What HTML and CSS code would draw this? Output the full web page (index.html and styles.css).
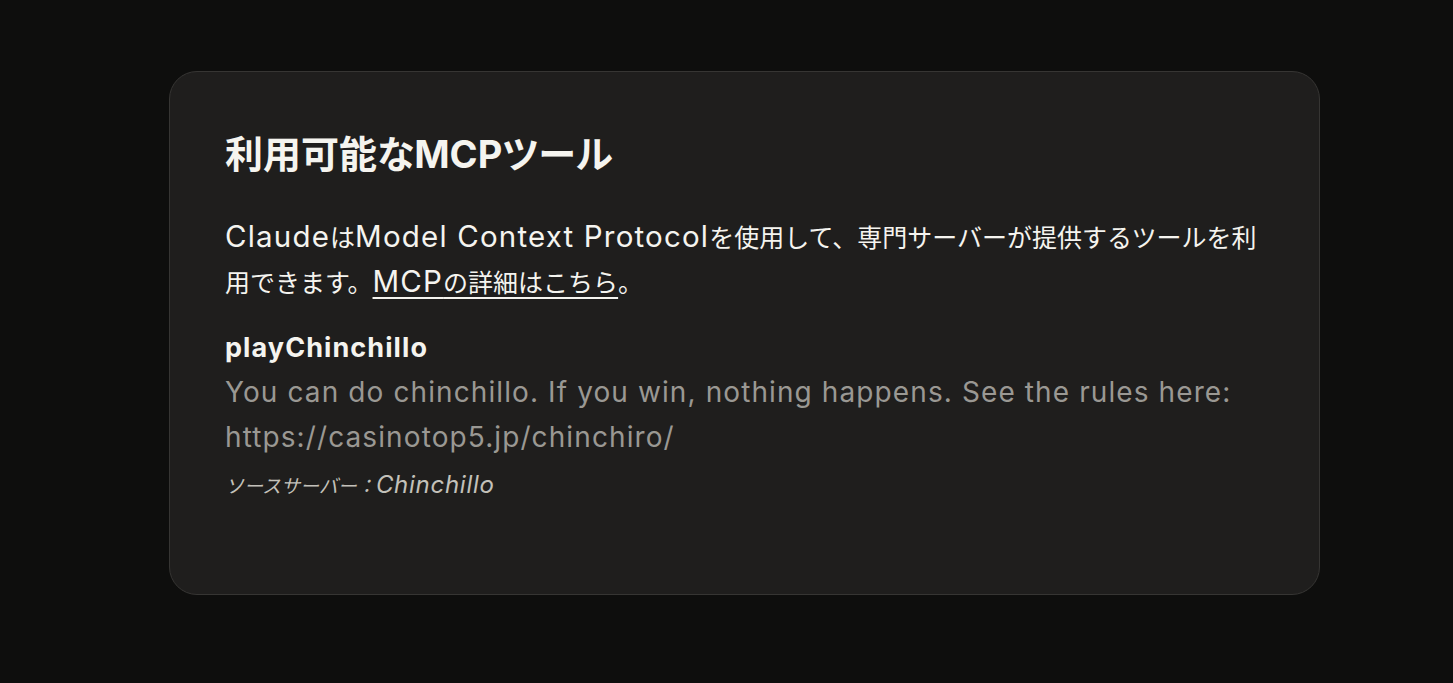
FILE: index.html
```html
<!DOCTYPE html>
<html lang="ja">
<head>
    <meta charset="UTF-8">
    <meta name="viewport" content="width=device-width, initial-scale=1.0">
    <title>利用可能なMCPツール</title>
    <link rel="stylesheet" href="styles.css">
</head>
<body>
    <div class="card">
        <h1 class="title">利用可能なMCPツール</h1>
        <p class="intro"><span class="en">Claude</span>は<span class="en">Model Context Protocol</span>を使用して、専門サーバーが提供するツールを利用できます。<a href="#" class="more"><span class="en">MCP</span>の詳細はこちら</a>。</p>
        <div class="tool">
            <div class="tool-name">playChinchillo</div>
            <div class="tool-desc">You can do chinchillo. If you win, nothing happens. See the rules here: https://casinotop5.jp/chinchiro/</div>
            <div class="tool-source">ソースサーバー：<span class="en">Chinchillo</span></div>
        </div>
    </div>
</body>
</html>
```

FILE: styles.css
```css
body {
    margin: 0;
    background: #0e0e0d;
    font-family: Inter, "Noto Sans CJK JP", sans-serif;
    color: #f5f4ef;
}
.card {
    box-sizing: border-box;
    width: 1151px;
    height: 524px;
    margin: 71px 0 0 169px;
    padding: 50px 55px;
    background: #1f1e1d;
    border: 1px solid #363533;
    border-radius: 28px;
}
/* latin runs inside japanese text are set a bit wider */
.en {
    font-size: 1.18em;
    letter-spacing: 0.04em;
    line-height: 1;
}
.title {
    margin: 0 0 30px;
    font-size: 38px;
    font-weight: 700;
    line-height: 64px;
    font-feature-settings: "palt";
}
.intro {
    margin: 0 0 22px;
    font-size: 25px;
    line-height: 45px;
}
.more {
    color: #f5f4ef;
    text-decoration: underline;
    text-decoration-thickness: 2px;
    text-underline-offset: 5px;
}
.tool-name {
    margin-bottom: 2px;
    font-size: 27px;
    font-weight: 700;
    line-height: 40px;
    letter-spacing: 0.04em;
}
.tool-desc {
    font-size: 28px;
    line-height: 45px;
    letter-spacing: 1.1px;
    color: #9a9893;
}
.tool-source {
    margin-top: 7px;
    font-size: 19px;
    font-style: italic;
    line-height: 40px;
    color: #c3c1ba;
}
.tool-source .en {
    font-size: 24px;
    letter-spacing: 0.03em;
}
```
